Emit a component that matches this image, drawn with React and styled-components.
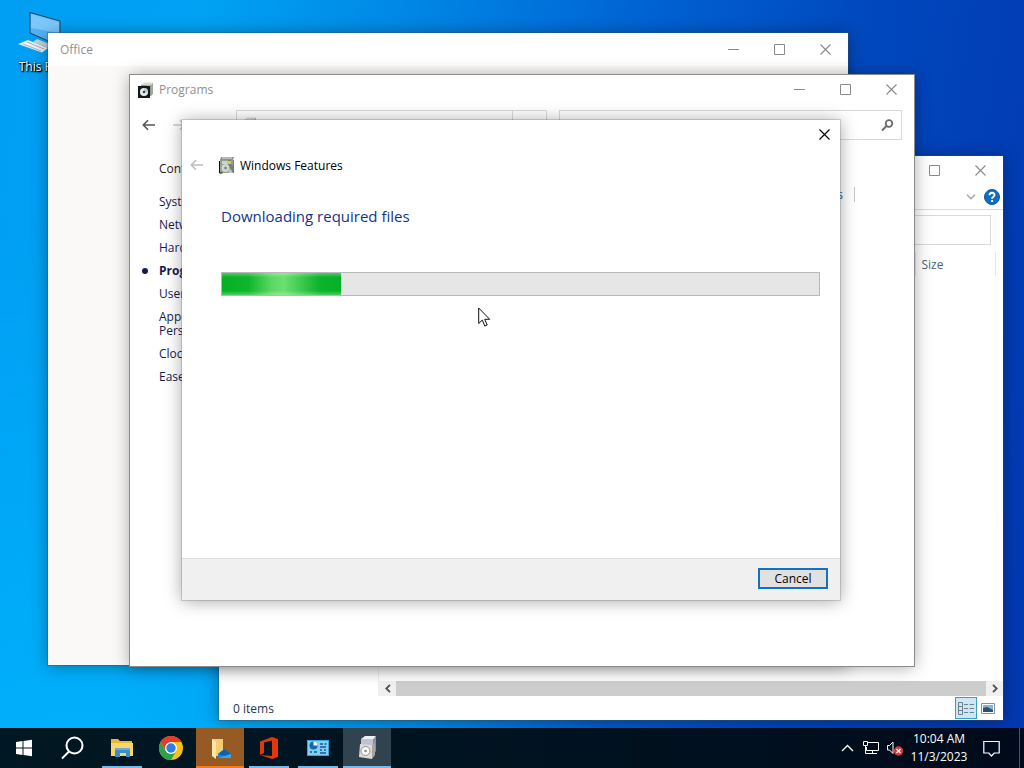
import React from "react"
import styled, { createGlobalStyle } from "styled-components"

const GlobalStyle = createGlobalStyle`
  * {
    box-sizing: border-box;
  }
  body {
    margin: 0;
    font-family: "Open Sans", "Noto Sans", sans-serif;
    font-size: 12px;
    line-height: 15px;
    color: #1b1b1b;
    overflow: hidden;
  }
  button {
    font: inherit;
    color: inherit;
    background: none;
    border: 0;
    padding: 0;
  }
`

const Screen = styled.div`
  height: 100vh;
  display: flex;
  flex-direction: column;
`
const Desktop = styled.main`
  position: relative;
  flex: 1;
  overflow: hidden;
  background: linear-gradient(98deg, #009ff4 0%, #00a2f4 18%, #0088e6 36%, #0062d2 58%, #0047bd 78%, #0338b0 100%);
`
const Shade = styled.div`
  height: 100%;
  background: linear-gradient(to top, rgba(0, 184, 255, 0.6), rgba(0, 170, 255, 0) 70%);
  mask-image: linear-gradient(to right, #000 0%, #000 25%, transparent 60%);
`
const DesktopIcon = styled.a`
  position: absolute;
  left: 1px;
  top: 11px;
  width: 76px;
  display: flex;
  flex-direction: column;
  align-items: center;
  gap: 2px;
  color: #fff;
  text-decoration: none;
  text-shadow: 1px 1px 2px #000, 0 0 2px #000, 1px 1px 1px #000;
`

/* windows sit freely on the desktop, one inset per side */
const Window = styled.section`
  position: absolute;
  inset: ${(p) => p.$inset};
  display: flex;
  flex-direction: column;
  overflow: hidden;
  background: ${(p) => p.$bg || "#fff"};
  outline: 1px solid ${(p) => p.$edge || "rgba(60, 80, 90, 0.4)"};
  box-shadow: 0 1px 16px rgba(0, 0, 0, 0.36);
`
const TitleBar = styled.header`
  display: flex;
  align-items: center;
  height: ${(p) => p.$height || 29}px;
  padding-left: ${(p) => p.$pad || 8}px;
  flex-shrink: 0;
  background: #fff;
  color: #8f8f8f;
`
const Title = styled.h2`
  margin: 0;
  padding-left: ${(p) => (p.$icon ? 5 : 0)}px;
  flex: 1;
  font-size: 12px;
  font-weight: 400;
`
const CaptionButton = styled.button`
  width: ${(p) => (p.$active ? 32 : 46)}px;
  height: 28px;
  display: grid;
  place-items: center;
  color: ${(p) => (p.$active ? "#000" : "#8a8a8a")};
`

/* file explorer */
const Ribbon = styled.div`
  display: flex;
  justify-content: flex-end;
  align-items: center;
  gap: 8px;
  height: 26px;
  padding-right: 3px;
  border-bottom: 1px solid #dadbdc;
  flex-shrink: 0;
`
const ExplorerBar = styled.div`
  display: flex;
  gap: 12px;
  padding: 5px 12px 6px 130px;
  flex-shrink: 0;
`
const Field = styled.input`
  flex: ${(p) => p.$grow || 1};
  min-width: 0;
  height: 30px;
  border: 1px solid #d9d9d9;
  padding: 0 8px;
  font: inherit;
`
const ExplorerBody = styled.div`
  display: flex;
  flex: 1;
  min-height: 0;
`
const NavPane = styled.nav`
  width: 160px;
  border-right: 1px solid #f0f0f0;
  flex-shrink: 0;
`
const FilePane = styled.div`
  flex: 1;
  display: flex;
  flex-direction: column;
  justify-content: space-between;
`
const Files = styled.table`
  width: 100%;
  margin-top: 1px;
  border-collapse: collapse;
  table-layout: fixed;
`
const Column = styled.th`
  width: ${(p) => p.$width || "auto"};
  height: 24px;
  padding: 0 6px;
  border-right: 1px solid #e8e8e8;
  text-align: left;
  font-weight: 400;
  color: #4c607a;
`
const ScrollBar = styled.div`
  display: flex;
  height: 15px;
  background: #f0f0f0;
`
const ScrollArrow = styled.button`
  width: 17px;
  display: grid;
  place-items: center;
  color: #505050;
`
const Thumb = styled.div`
  flex: 1;
  background: #cdcdcd;
`
const StatusBar = styled.footer`
  display: flex;
  align-items: center;
  height: 24px;
  padding: 0 4px 0 14px;
  color: #25364f;
  flex-shrink: 0;
`
const Count = styled.span`
  flex: 1;
`
const ViewButton = styled.button`
  width: 22px;
  height: 22px;
  display: grid;
  place-items: center;
  background: ${(p) => (p.$on ? "#cce8f6" : "none")};
  border: 1px solid ${(p) => (p.$on ? "#3a9fc8" : "transparent")};
`

/* office */
const OfficeBody = styled.div`
  flex: 1;
  background: #faf9f8;
`

/* control panel */
const NavRow = styled.div`
  display: flex;
  align-items: center;
  padding: 6px 12px 0 4px;
  flex-shrink: 0;
`
const NavButton = styled.button`
  width: 30px;
  height: 30px;
  display: grid;
  place-items: center;
  color: ${(p) => (p.$faded ? "#c8c8c8" : "#555")};
`
const Address = styled.div`
  display: flex;
  align-items: center;
  flex: 312;
  height: 30px;
  margin: 0 12px;
  padding-left: 4px;
  border: 1px solid #d9d9d9;
`
const AddressDivider = styled.div`
  width: 34px;
  height: 100%;
  margin-left: auto;
  border-left: 1px solid #d9d9d9;
`
const SearchBox = styled.label`
  display: flex;
  align-items: center;
  flex: 342;
  height: 30px;
  padding-right: 7px;
  border: 1px solid #d9d9d9;
  color: #6a6a6a;
`
const SearchInput = styled.input`
  flex: 1;
  min-width: 0;
  border: 0;
  outline: 0;
  font: inherit;
`
const PanelBody = styled.div`
  display: flex;
  flex: 1;
`
const SideNav = styled.nav`
  width: 180px;
  padding: 21px 20px 0 29px;
`
const SideList = styled.ul`
  list-style: none;
  margin: 19px 0 0;
  padding: 0;
  display: flex;
  flex-direction: column;
  gap: 9px;
  line-height: 14px;
`
const SideItem = styled.li`
  display: flex;
  align-items: center;
  font-weight: ${(p) => (p.$current ? 700 : 400)};
`
const Dot = styled.span`
  width: 6px;
  height: 6px;
  margin: 0 11px 0 -17px;
  border-radius: 50%;
  background: #151c55;
  flex-shrink: 0;
`
const SideLink = styled.a`
  color: ${(p) => (p.$plain ? "#1b1b1b" : "#151c55")};
  text-decoration: none;
`
const Tasks = styled.div`
  flex: 1;
  padding: 23px 59px 0 0;
`
const TaskHeading = styled.h3`
  margin: 0 0 9px;
  font-size: 15px;
  font-weight: 400;
  text-align: center;
  color: #1e7a3c;
`
const TaskList = styled.ul`
  display: flex;
  justify-content: flex-end;
  list-style: none;
  margin: 0;
  padding: 0;
`
const Task = styled.li`
  padding: 0 11px;
  border-right: 1px solid #c8c8c8;
  white-space: nowrap;
`
const TaskLink = styled.a`
  color: #1a5a96;
  text-decoration: none;
`

/* features wizard */
const WizardHead = styled.div`
  display: flex;
  align-items: center;
  height: 32px;
  padding-left: 8px;
  flex-shrink: 0;
`
const WizardBack = styled.button`
  width: 14px;
  height: 12px;
  display: grid;
  margin-right: 15px;
  color: #bdbdbd;
`
const WizardTitle = styled.h2`
  margin: 0 0 0 5px;
  font-size: 12px;
  font-weight: 400;
  color: #000;
`
const WizardBody = styled.div`
  flex: 1;
  padding: 25px 20px 0 39px;
`
const Instruction = styled.h1`
  margin: 0 0 46px;
  font-size: 15px;
  line-height: 20px;
  font-weight: 400;
  color: #14348a;
`
const Progress = styled.div`
  height: 24px;
  border: 1px solid #b8b8b8;
  background: #e6e6e6;
`
const ProgressFill = styled.div`
  height: 22px;
  background: linear-gradient(to bottom, rgba(255, 255, 255, 0.3), transparent 20%, transparent 80%, rgba(255, 255, 255, 0.3)),
    linear-gradient(to right, #06b025 0%, #0db62b 22%, #5cd864 42%, #6ae070 52%, #0bb42a 82%, #06b025 100%);
`
const WizardFoot = styled.footer`
  display: flex;
  justify-content: flex-end;
  align-items: center;
  height: 42px;
  padding: 0 12px 2px 0;
  background: #f0f0f0;
  border-top: 1px solid #dfdfdf;
  flex-shrink: 0;
`
const PushButton = styled.button`
  width: 70px;
  height: 21px;
  background: #e1e1e1;
  border: 2px solid #1072c0;
  line-height: 15px;
  color: #000;
`
const Pointer = styled.svg`
  position: absolute;
  left: 478px;
  top: 307px;
`

/* taskbar */
const Taskbar = styled.footer`
  display: flex;
  align-items: stretch;
  justify-content: space-between;
  height: 40px;
  background: linear-gradient(to right, #001823, #00121f 60%, #000a1a);
  color: #fff;
`
const Group = styled.div`
  display: flex;
  gap: ${(p) => p.$gap || 0}px;
`
const TaskButton = styled.button`
  width: 48px;
  display: flex;
  flex-direction: column;
  align-items: center;
  justify-content: space-between;
  padding-top: 8px;
  background: ${(p) => p.$bg || "none"};
`
const Underline = styled.span`
  width: ${(p) => (p.$full ? 48 : 40)}px;
  height: 2px;
  background: ${(p) => p.$color || "#76b9ed"};
`
const TrayButton = styled.button`
  width: ${(p) => p.$width || 24}px;
  display: grid;
  place-items: center;
`
const Clock = styled.time`
  width: 64px;
  padding-top: 2px;
  line-height: 18px;
  text-align: center;
  white-space: nowrap;
`
const ShowDesktop = styled.button`
  width: 5px;
  margin-left: 8px;
  border-left: 1px solid #4a5560;
`

const Minimize = () => (
  <svg width="11" height="11" viewBox="0 0 11 11" stroke="currentColor"><path d="M0 5.5h11" /></svg>
)
const Maximize = () => (
  <svg width="11" height="11" viewBox="0 0 11 11" stroke="currentColor" fill="none"><path d="M.5 .5h10v10h-10z" /></svg>
)
const Close = () => (
  <svg width="11" height="11" viewBox="0 0 11 11" stroke="currentColor" strokeWidth="1.1"><path d="M.5 .5l10 10M10.5 .5l-10 10" /></svg>
)
const Arrow = ({ flip }) => (
  <svg width="14" height="12" viewBox="0 0 14 12" fill="none" stroke="currentColor" strokeWidth="1.6">
    <path d={flip ? "M1 6h11.500M8 1.200L12.700 6 8 10.800" : "M13 6H1.500M6 1.200L1.300 6 6 10.800"} />
  </svg>
)
const Programs = () => (
  <svg width="16" height="16" viewBox="0 0 16 16">
    <path d="M3 3l3-2.500h8.500L13 3z" fill="#d8dad6" />
    <path d="M3 3h10v11H3z" fill="#8f9a90" />
    <path d="M9 2.500h3V7H9z" fill="#e8c53c" />
    <path d="M13 3l2-2.500V12l-2 2z" fill="#a3a79d" />
    <path d="M0 4h12v12H0z" fill="#16191b" />
    <circle cx="6" cy="10" r="4" fill="#e5ecef" />
    <path d="M6 6a4 4 0 0 1 4 4H6z" fill="#b9cdd2" />
    <circle cx="6" cy="10" r="1.300" fill="#3b4246" />
  </svg>
)
const Features = () => (
  <svg width="16" height="17" viewBox="0 0 16 17">
    <path d="M2 0h13l-1 3H1z" fill="#8c918b" />
    <path d="M3 1h10" stroke="#dfe3dc" />
    <path d="M1 3h14v13H1z" fill="#92a08f" />
    <path d="M9 3h3v4l2 2V3h1v13H9z" fill="#6f7f7b" />
    <path d="M8 4h4v3H8z" fill="#ecc43f" />
    <path d="M3 4h5v3H3z" fill="#c8d6d2" />
    <path d="M.5 4v12h3" fill="none" stroke="#111" />
    <circle cx="6.500" cy="11" r="4" fill="#cfd6d2" />
    <circle cx="6.500" cy="11" r="1.300" fill="#75817d" />
    <path d="M11 11l3 5H9z" fill="#c2c9c2" />
  </svg>
)
const Magnifier = () => (
  <svg width="13" height="13" viewBox="0 0 13 13" fill="none" stroke="currentColor">
    <circle cx="8" cy="4.500" r="3.300" strokeWidth="1.800" />
    <path d="M5.500 7L1 11.500" strokeWidth="2" />
  </svg>
)
const Help = () => (
  <svg width="16" height="16" viewBox="0 0 16 16">
    <circle cx="8" cy="8" r="7.500" fill="#0d6fc0" stroke="#0a559c" />
    <path d="M5.500 6.300C5.500 3 10.500 3 10.500 6c0 1.800-2.400 1.800-2.400 3.700" fill="none" stroke="#fff" strokeWidth="1.900" />
    <path d="M7.100 11h2v2h-2z" fill="#fff" />
  </svg>
)
const Computer = () => (
  <svg width="48" height="46" viewBox="0 0 48 46">
    <path d="M15 1.500L45 10v25L15 22z" fill="#52b2f7" stroke="#22435c" />
    <path d="M16 3l28 8v11L16 17z" fill="#7cc8fb" />
    <path d="M22 28l10 4 10-1v5l-8 1-16-6z" fill="#c3d0d8" />
    <path d="M3 33l10-4 20 8-6 4.500z" fill="#edf1f3" />
    <path d="M8 33l18 7M12 31l17 7" stroke="#a7b1b8" />
  </svg>
)
const Folder = () => (
  <svg width="24" height="24" viewBox="0 0 24 24">
    <path d="M1 3h7l2 2h12v15H1z" fill="#e9b640" />
    <path d="M1 7h22v13H1z" fill="#fbd667" />
    <path d="M5 12h15v9h-4v-4h-6v4H5z" fill="#3c8cc9" />
    <path d="M5 12h15v2H5z" fill="#64addf" />
  </svg>
)
const Chrome = () => (
  <svg width="24" height="24" viewBox="0 0 24 24">
    <circle cx="12" cy="12" r="12" fill="#fbc116" />
    <path d="M1.600 6A12 12 0 0 1 22.400 6H12L6.800 15z" fill="#e33b2e" />
    <path d="M1.600 6A12 12 0 0 0 12 24l5.200-9H6.800z" fill="#2ba24c" />
    <circle cx="12" cy="12" r="6" fill="#fff" />
    <circle cx="12" cy="12" r="4.700" fill="#2f7de9" />
  </svg>
)
const CloudFolder = () => (
  <svg width="24" height="24" viewBox="0 0 24 24">
    <path d="M4 3h11v17H4z" fill="#f4cd73" />
    <path d="M4 3l4 3v17l-4-3z" fill="#ffe7a4" />
    <path d="M10 22v-4l6.500-5L23 18v4z" fill="#1484d9" />
    <path d="M10 18l6.500-5 6.500 5-6 2z" fill="#0c62ad" />
    <path d="M10 22l13-4v4z" fill="#36a7ee" />
  </svg>
)
const OfficeLogo = () => (
  <svg width="24" height="24" viewBox="0 0 24 24">
    <path d="M3 5.500L15 1l6 2v18l-6 2-12-4 12 1V4.500L7 6.500v10.500l-4 2z" fill="#e0370c" />
  </svg>
)
const ControlPanel = () => (
  <svg width="24" height="24" viewBox="0 0 24 24">
    <path d="M1 4h22v16H1z" fill="#3aa4de" />
    <path d="M2 5h20v14H2z" fill="#7fd0f5" />
    <circle cx="7.500" cy="9.500" r="4" fill="#1768b3" />
    <path d="M7.500 9.500v-4a4 4 0 0 1 4 4z" fill="#f4fbff" />
    <path d="M14 8h3M18.500 8h2M14 11h6M14 14h2M18 14h2M4 16h2M8 16h3M14 17h6" stroke="#17579a" strokeWidth="1.500" />
  </svg>
)
const Installer = () => (
  <svg width="24" height="24" viewBox="0 0 24 24">
    <path d="M6 3l4-3h11l-3 4z" fill="#eef0f6" />
    <path d="M6 3h12v17H6z" fill="#bfc2d4" />
    <path d="M18 4l3-4v15l-3 4z" fill="#8d8f9c" />
    <path d="M5 8l12 1v14L4 21z" fill="#dddad4" />
    <path d="M17 9l3-2v12l-3 4z" fill="#a8a39b" />
    <circle cx="10.500" cy="15" r="4.500" fill="#f7f8f6" stroke="#8f9392" />
    <circle cx="10.500" cy="15" r="1.300" fill="#8b908e" />
  </svg>
)

const Caption = ({ label }) => (
  <>
    <CaptionButton aria-label={`Minimize ${label}`}><Minimize /></CaptionButton>
    <CaptionButton aria-label={`Maximize ${label}`}><Maximize /></CaptionButton>
    <CaptionButton aria-label={`Close ${label}`}><Close /></CaptionButton>
  </>
)

const categories = [
  "System",
  "Network",
  "Hardware and Sound",
  "Programs",
  "User Accounts",
  "Appearance and Personalization",
  "Clock and Region",
  "Ease of Access",
]
const progress = 20

const App = () => {
  return (
    <Screen>
      <GlobalStyle />
      <Desktop>
        <Shade />
        <DesktopIcon href="#this-pc">
          <Computer />
          This PC
        </DesktopIcon>

        <Window $inset="156px 21px 8px 219px" aria-label="File Explorer">
          <TitleBar $height={28}>
            <Title />
            <Caption label="File Explorer" />
          </TitleBar>
          <Ribbon>
            <svg width="10" height="6" viewBox="0 0 10 6" fill="none" stroke="#a5a5a5" strokeWidth="1.500"><path d="M1 .8l4 4 4-4" /></svg>
            <Help />
          </Ribbon>
          <ExplorerBar>
            <Field $grow={3} aria-label="Address" />
            <Field aria-label="Search folder" />
          </ExplorerBar>
          <ExplorerBody>
            <NavPane />
            <FilePane>
              <Files>
                <thead>
                  <tr>
                    <Column>Name</Column>
                    <Column $width="140px">Date modified</Column>
                    <Column $width="110px">Type</Column>
                    <Column $width="80px">Size</Column>
                    <td width="8" />
                  </tr>
                </thead>
              </Files>
              <ScrollBar>
                <ScrollArrow aria-label="Scroll left">
                  <svg width="6" height="9" viewBox="0 0 6 9" fill="none" stroke="currentColor" strokeWidth="1.800"><path d="M5 .8L1.300 4.500 5 8.200" /></svg>
                </ScrollArrow>
                <Thumb />
                <ScrollArrow aria-label="Scroll right">
                  <svg width="6" height="9" viewBox="0 0 6 9" fill="none" stroke="currentColor" strokeWidth="1.800"><path d="M1 .8l3.700 3.700L1 8.200" /></svg>
                </ScrollArrow>
              </ScrollBar>
            </FilePane>
          </ExplorerBody>
          <StatusBar>
            <Count>0 items</Count>
            <ViewButton $on aria-label="Details view">
              <svg width="16" height="13" viewBox="0 0 16 13" fill="none" stroke="#71808c">
                <path d="M.5 .5h4v12h-4zM.5 4.500h4M.5 8.500h4M6 2.500h4M11.500 2.500H16M6 6.500h4M11.500 6.500H16M6 10.500h4M11.500 10.500H16" />
              </svg>
            </ViewButton>
            <ViewButton aria-label="Thumbnail view">
              <svg width="14" height="11" viewBox="0 0 14 11">
                <path d="M.5 .5h13v10H.5z" fill="#fff" stroke="#87919a" />
                <path d="M2 2h10v7H2z" fill="#7db4e6" />
                <path d="M2 5l4-1 6 3v2H2z" fill="#33506a" />
              </svg>
            </ViewButton>
          </StatusBar>
        </Window>

        <Window $inset="33px 176px 63px 48px" aria-label="Office">
          <TitleBar $height={33} $pad={12}>
            <Title>Office</Title>
            <Caption label="Office" />
          </TitleBar>
          <OfficeBody />
        </Window>

        <Window $inset="75px 110px 62px 130px" $edge="#8c8c8c" aria-label="Programs">
          <TitleBar>
            <Programs />
            <Title $icon>Programs</Title>
            <Caption label="Programs" />
          </TitleBar>
          <NavRow>
            <NavButton aria-label="Back"><Arrow /></NavButton>
            <NavButton $faded aria-label="Forward"><Arrow flip /></NavButton>
            <NavButton $faded aria-label="Up"><Arrow /></NavButton>
            <Address>
              <Programs />
              <AddressDivider />
            </Address>
            <SearchBox>
              <SearchInput aria-label="Search Control Panel" />
              <Magnifier />
            </SearchBox>
          </NavRow>
          <PanelBody>
            <SideNav>
              <SideLink $plain href="#home">Control Panel</SideLink>
              <SideList>
                {categories.map((name) => (
                  <SideItem key={name} $current={name === "Programs"}>
                    {name === "Programs" && <Dot />}
                    <SideLink href={`#${name}`}>{name}</SideLink>
                  </SideItem>
                ))}
              </SideList>
            </SideNav>
            <Tasks>
              <TaskHeading>Programs and Features</TaskHeading>
              <TaskList>
                <Task><TaskLink href="#uninstall">Uninstall a program</TaskLink></Task>
                <Task><TaskLink href="#updates">View installed updates</TaskLink></Task>
              </TaskList>
            </Tasks>
          </PanelBody>
        </Window>

        <Window $inset="120px 184px 128px 182px" $edge="rgba(120, 120, 120, 0.3)" role="dialog" aria-label="Windows Features">
          <TitleBar>
            <Title />
            <CaptionButton $active aria-label="Close"><Close /></CaptionButton>
          </TitleBar>
          <WizardHead>
            <WizardBack aria-label="Back"><Arrow /></WizardBack>
            <Features />
            <WizardTitle>Windows Features</WizardTitle>
          </WizardHead>
          <WizardBody>
            <Instruction>Downloading required files</Instruction>
            <Progress role="progressbar" aria-label="Download progress" aria-valuenow={progress}>
              <ProgressFill style={{ width: `${progress}%` }} />
            </Progress>
          </WizardBody>
          <WizardFoot>
            <PushButton>Cancel</PushButton>
          </WizardFoot>
        </Window>

        <Pointer width="13" height="20" viewBox="0 0 13 20">
          <path d="M.7 1v15.500l3.600-3.400 2.500 5.900 2.400-1-2.500-5.700h5z" fill="#fff" stroke="#111" />
        </Pointer>
      </Desktop>

      <Taskbar>
        <Group $gap={1}>
          <TaskButton aria-label="Start">
            <svg width="24" height="24" viewBox="0 0 24 24" fill="#fff">
              <path d="M4 6l6.500-1v6.500H4zM11.500 4.900L20 3.800v7.700h-8.500zM4 12.500h6.500V19L4 18zM11.500 12.500H20v7.700l-8.500-1.200z" />
            </svg>
          </TaskButton>
          <TaskButton aria-label="Search">
            <svg width="24" height="24" viewBox="0 0 24 24" fill="none" stroke="#fff" strokeWidth="2">
              <circle cx="13.500" cy="9.500" r="8" />
              <path d="M8 15.500L1 22.500" />
            </svg>
          </TaskButton>
          <TaskButton aria-label="File Explorer"><Folder /><Underline /></TaskButton>
          <TaskButton aria-label="Chrome"><Chrome /></TaskButton>
          <TaskButton $bg="#965a25" aria-label="OneDrive"><CloudFolder /><Underline $full $color="#f77b12" /></TaskButton>
          <TaskButton aria-label="Office"><OfficeLogo /><Underline /></TaskButton>
          <TaskButton aria-label="Control Panel"><ControlPanel /><Underline /></TaskButton>
          <TaskButton $bg="#30434f" aria-label="Windows Features"><Installer /><Underline $full /></TaskButton>
        </Group>
        <Group>
          <TrayButton aria-label="Show hidden icons">
            <svg width="13" height="8" viewBox="0 0 13 8" fill="none" stroke="#fff" strokeWidth="1.400"><path d="M1 7l5.500-5.500L12 7" /></svg>
          </TrayButton>
          <TrayButton aria-label="Network">
            <svg width="18" height="16" viewBox="0 0 18 16" fill="none" stroke="#fff">
              <path d="M6 2.500h10.500v8H4.500V7M10.500 10.500v3M6 13.500h9M1.500 1.500h4v4h-4zM3.500 5.500v8H6" />
            </svg>
          </TrayButton>
          <TrayButton aria-label="Volume muted">
            <svg width="18" height="16" viewBox="0 0 18 16">
              <path d="M1.500 5.500h2l3.500-3.500v11.500l-3.500-3.500h-2z" fill="none" stroke="#fff" />
              <circle cx="12.500" cy="11" r="4.700" fill="#cf3a3a" />
              <path d="M10.500 9l4 4M14.500 9l-4 4" stroke="#fff" strokeWidth="1.300" />
            </svg>
          </TrayButton>
          <Clock>
            10:04 AM
            <br />
            11/3/2023
          </Clock>
          <TrayButton $width={40} aria-label="Notifications">
            <svg width="17" height="17" viewBox="0 0 17 17" fill="none" stroke="#fff" strokeWidth="1.200">
              <path d="M.8 1.500h15.400v11.500h-5l-2.700 3-2.700-3h-5z" />
            </svg>
          </TrayButton>
          <ShowDesktop aria-label="Show desktop" />
        </Group>
      </Taskbar>
    </Screen>
  )
}

export default App
